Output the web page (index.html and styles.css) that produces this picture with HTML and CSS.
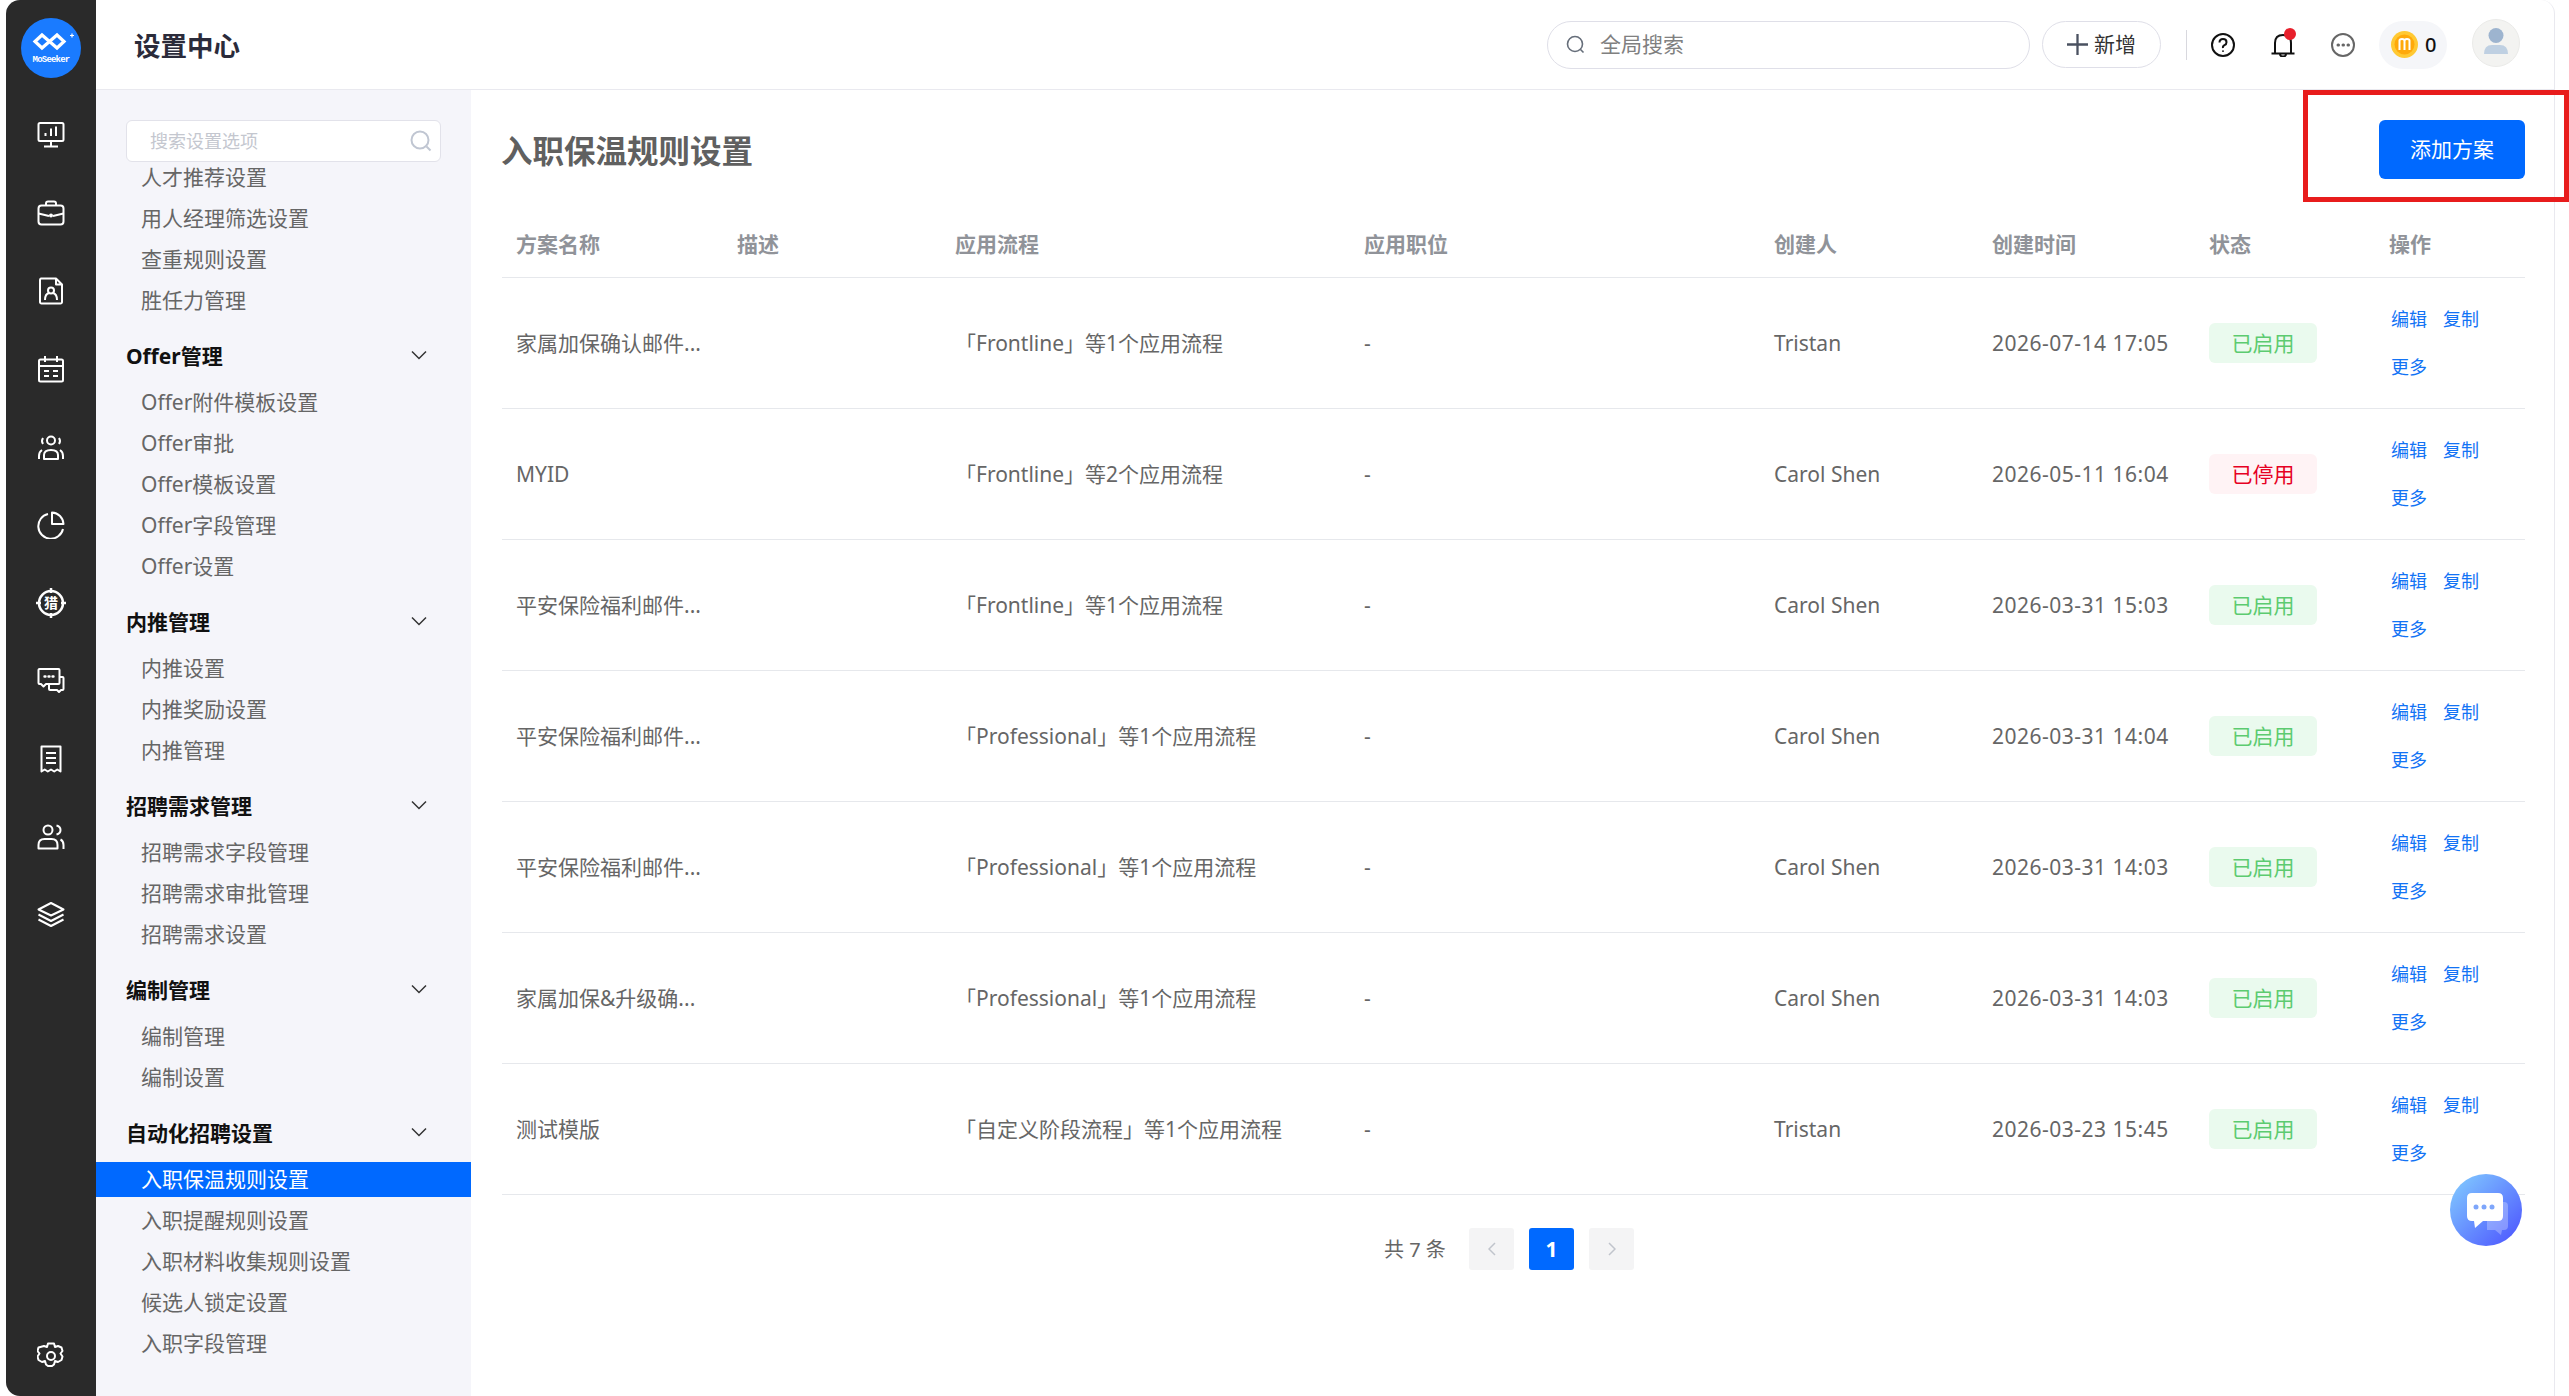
FILE: index.html
```html
<!DOCTYPE html>
<html lang="zh-CN">
<head>
    <meta charset="UTF-8">
    <title>设置中心</title>
    <link rel="stylesheet" href="styles.css">
</head>
<body>
<div class="app">
    <!-- Icon rail -->
    <nav class="rail">
        <div class="logo">
            <svg width="60" height="60" viewBox="0 0 60 60">
                <path class="logo-mark" d="M14 23.5 21 17l7.5 6.5L21 30ZM28.500 23.500 36 17l7 6.500L36 30Z"/>
                <path class="logo-star" d="M49 17.500h4M51 15.500v4"/>
                <text class="logo-text" x="30" y="44" text-anchor="middle">MoSeeker</text>
            </svg>
        </div>
        <a class="rail-item"><svg class="rail-icon" viewBox="0 0 28 28"><rect x="1.500" y="2" width="25" height="18" rx="1.500"/><path d="M14 20v5M7 25.500h14M8.500 15v-3M14 15V7.500M19 15V5.500"/></svg></a>
        <a class="rail-item"><svg class="rail-icon" viewBox="0 0 28 28"><rect x="1.500" y="6.500" width="25" height="19" rx="3"/><path d="M9 6.500V4.500q0-2 2-2h6q2 0 2 2v2M1.500 14.500 12 17M26.500 14.500 16 17"/><circle cx="14" cy="16.500" r="1"/></svg></a>
        <a class="rail-item"><svg class="rail-icon" viewBox="0 0 28 28"><path d="M4 1.500h15l6 6V25a1.500 1.500 0 0 1-1.500 1.500h-19A1.500 1.500 0 0 1 3 25V3a1.500 1.500 0 0 1 1-1.500ZM19 1.500v6h6"/><circle cx="14" cy="13.500" r="3"/><path d="M8 23q0-6 4-7M20 23q0-6-4-7"/></svg></a>
        <a class="rail-item"><svg class="rail-icon" viewBox="0 0 28 28"><rect x="2" y="4.500" width="24" height="22" rx="1.500"/><path d="M8 1v6M20 1v6M2 11h24M7 16h5M16 16h5M7 21h5M16 21h5"/></svg></a>
        <a class="rail-item"><svg class="rail-icon" viewBox="0 0 28 28"><circle cx="14" cy="7.500" r="4"/><path d="M6 11q-2-3 0-6M22 11q2-3 0-6M7 26v-4q0-5 7-5t7 5v4ZM2 26v-3q0-4 3-6M26 26v-3q0-4-3-6"/></svg></a>
        <a class="rail-item"><svg class="rail-icon" viewBox="0 0 28 28"><path d="M11 3a12.500 12.500 0 1 0 15 15"/><path d="M15 1.500a12 12 0 0 1 11.500 11.500H15Z"/></svg></a>
        <a class="rail-item rail-hunt"><svg class="rail-icon rail-icon-ring" viewBox="0 0 30 30"><circle cx="15" cy="15" r="12"/><path d="M15 0v5M15 25v5M0 15h5M25 15h5"/></svg><span class="hunt-text">猎</span></a>
        <a class="rail-item"><svg class="rail-icon" viewBox="0 0 28 28"><path d="M2.500 2h19a1 1 0 0 1 1 1v13a1 1 0 0 1-1 1H9l-2.500 2.500L4 17H2.500a1 1 0 0 1-1-1V3a1 1 0 0 1 1-1Z"/><path d="M22.500 10h3a1 1 0 0 1 1 1v11a1 1 0 0 1-1 1H24l-2 2-2-2h-7a1 1 0 0 1-1-1v-5"/><path class="dots" d="M7.500 9.500h1M11.500 9.500h1M15.500 9.500h1"/></svg></a>
        <a class="rail-item"><svg class="rail-icon" viewBox="0 0 28 28"><path d="M4.500 1.500h19v25l-3.200-2-3.100 2-3.200-2-3.200 2-3.100-2-3.200 2Z"/><path d="M9 8h10M9 13h10M9 18h10"/></svg></a>
        <a class="rail-item"><svg class="rail-icon" viewBox="0 0 28 28"><circle cx="11" cy="7" r="4.500"/><path d="M1.500 25.500V22q0-6 6-6h7q6 0 6 6v3.500ZM19.500 2.500q4 1 4 4.500t-4 4.500M26.500 26v-4q0-4-3-5.500"/></svg></a>
        <a class="rail-item"><svg class="rail-icon" viewBox="0 0 28 28"><path d="M14 2 26.500 8.500 14 14.500 1.500 8.500ZM1.500 13.500 14 20l12.500-6.500M1.500 18.500 14 25l12.500-6.500"/></svg></a>
        <a class="rail-item rail-bottom"><svg class="rail-icon" viewBox="0 0 28 28"><path d="M11 1.500h6l1 3.500 3-1 3.500 1.500 1 3.500-2 2.500 2 3-1 3.500-3.500 2-3-1-1 3.500-2 1.500h-4l-2-1.500-1-3.500-3 1-3.500-2-1-3.500 2-3-2-2.500 1-3.500L7 4l3 1Z"/><circle cx="14" cy="14" r="4"/></svg></a>
    </nav>

    <div class="right">
        <!-- Top bar -->
        <header class="topbar">
            <div class="topbar-title">设置中心</div>
            <div class="global-search">
                <svg class="search-icon" viewBox="0 0 20 20"><circle cx="9" cy="9" r="7.500"/><path d="m14.500 14.500 3 3"/></svg>
                <span>全局搜索</span>
            </div>
            <button class="add-btn"><svg class="plus" viewBox="0 0 22 22"><path d="M11 0v22M0 11h22"/></svg>新增</button>
            <span class="divider"></span>
            <svg class="top-icon" viewBox="0 0 24 24"><circle cx="12" cy="12" r="11"/><path d="M8.500 9.500q0-3.500 3.500-3.500t3.500 3.200q0 2-2 3t-1.500 2.800"/><path d="M12 17.500v1.200"/></svg>
            <div class="bell">
                <svg class="top-icon" viewBox="0 0 24 24"><path d="M4 20V10q0-8 8-8t8 8v10M0.500 20.500h23M9 21q0 2.500 3 2.500t3-2.500"/></svg>
                <span class="bell-dot"></span>
            </div>
            <svg class="top-icon top-icon-grey" viewBox="0 0 24 24"><circle cx="12" cy="12" r="11"/><path class="dots" d="M7 12h.5M12 12h.5M17 12h.5"/></svg>
            <div class="coins">
                <svg width="27" height="27" viewBox="0 0 27 27"><circle cx="13.500" cy="13.500" r="13.500" fill="#ffc933"/><circle cx="13.500" cy="13.500" r="10" fill="#ffa90a"/><path d="M8.500 19V9.500q0-1.500 2.500-1.500t2.500 2v9M13.500 10q0-2 2.500-2t2.500 1.500V19" fill="none" stroke="#fff" stroke-width="2"/></svg>
                <span>0</span>
            </div>
            <div class="avatar">
                <svg width="48" height="48" viewBox="0 0 48 48"><circle cx="24" cy="16.500" r="7.500" fill="#9db4cf"/><path d="M12 35q0-9 8-9h8q8 0 8 9Z" fill="#bfd0e2"/></svg>
            </div>
        </header>

        <div class="body">
            <!-- Settings menu -->
            <aside class="sidebar">
                <div class="side-search">
                    <input type="text" placeholder="搜索设置选项">
                    <svg class="side-search-icon" viewBox="0 0 22 22"><circle cx="10" cy="10" r="8.500"/><path d="m16.500 16.500 4 4"/></svg>
                </div>
                <div class="side-list">
                    <a class="side-item">人才推荐设置</a>
                    <a class="side-item">用人经理筛选设置</a>
                    <a class="side-item">查重规则设置</a>
                    <a class="side-item">胜任力管理</a>
                </div>
                <div class="side-group">Offer管理<svg class="chevron" viewBox="0 0 16 10"><path d="m1 1.500 7 7 7-7"/></svg></div>
                <div class="side-list">
                    <a class="side-item">Offer附件模板设置</a>
                    <a class="side-item">Offer审批</a>
                    <a class="side-item">Offer模板设置</a>
                    <a class="side-item">Offer字段管理</a>
                    <a class="side-item">Offer设置</a>
                </div>
                <div class="side-group">内推管理<svg class="chevron" viewBox="0 0 16 10"><path d="m1 1.500 7 7 7-7"/></svg></div>
                <div class="side-list">
                    <a class="side-item">内推设置</a>
                    <a class="side-item">内推奖励设置</a>
                    <a class="side-item">内推管理</a>
                </div>
                <div class="side-group">招聘需求管理<svg class="chevron" viewBox="0 0 16 10"><path d="m1 1.500 7 7 7-7"/></svg></div>
                <div class="side-list">
                    <a class="side-item">招聘需求字段管理</a>
                    <a class="side-item">招聘需求审批管理</a>
                    <a class="side-item">招聘需求设置</a>
                </div>
                <div class="side-group">编制管理<svg class="chevron" viewBox="0 0 16 10"><path d="m1 1.500 7 7 7-7"/></svg></div>
                <div class="side-list">
                    <a class="side-item">编制管理</a>
                    <a class="side-item">编制设置</a>
                </div>
                <div class="side-group">自动化招聘设置<svg class="chevron" viewBox="0 0 16 10"><path d="m1 1.500 7 7 7-7"/></svg></div>
                <div class="side-list">
                    <a class="side-item active">入职保温规则设置</a>
                    <a class="side-item">入职提醒规则设置</a>
                    <a class="side-item">入职材料收集规则设置</a>
                    <a class="side-item">候选人锁定设置</a>
                    <a class="side-item">入职字段管理</a>
                </div>
            </aside>

            <!-- Rule list -->
            <main class="main">
                <div class="page-head">
                    <h1>入职保温规则设置</h1>
                    <button class="primary-btn">添加方案</button>
                </div>
                <table class="rules">
                    <colgroup>
                        <col class="c-name"><col class="c-desc"><col class="c-flow"><col class="c-job">
                        <col class="c-user"><col class="c-time"><col class="c-state"><col class="c-ops">
                    </colgroup>
                    <thead>
                        <tr><th>方案名称</th><th>描述</th><th>应用流程</th><th>应用职位</th><th>创建人</th><th>创建时间</th><th>状态</th><th>操作</th></tr>
                    </thead>
                    <tbody>
                        <tr>
                            <td>家属加保确认邮件...</td><td></td><td>「Frontline」等1个应用流程</td><td>-</td><td>Tristan</td><td class="date">2026-07-14 17:05</td>
                            <td><span class="badge on">已启用</span></td>
                            <td class="ops"><a>编辑</a><a>复制</a><a>更多</a></td>
                        </tr>
                        <tr>
                            <td class="latin">MYID</td><td></td><td>「Frontline」等2个应用流程</td><td>-</td><td>Carol Shen</td><td class="date">2026-05-11 16:04</td>
                            <td><span class="badge off">已停用</span></td>
                            <td class="ops"><a>编辑</a><a>复制</a><a>更多</a></td>
                        </tr>
                        <tr>
                            <td>平安保险福利邮件...</td><td></td><td>「Frontline」等1个应用流程</td><td>-</td><td>Carol Shen</td><td class="date">2026-03-31 15:03</td>
                            <td><span class="badge on">已启用</span></td>
                            <td class="ops"><a>编辑</a><a>复制</a><a>更多</a></td>
                        </tr>
                        <tr>
                            <td>平安保险福利邮件...</td><td></td><td>「Professional」等1个应用流程</td><td>-</td><td>Carol Shen</td><td class="date">2026-03-31 14:04</td>
                            <td><span class="badge on">已启用</span></td>
                            <td class="ops"><a>编辑</a><a>复制</a><a>更多</a></td>
                        </tr>
                        <tr>
                            <td>平安保险福利邮件...</td><td></td><td>「Professional」等1个应用流程</td><td>-</td><td>Carol Shen</td><td class="date">2026-03-31 14:03</td>
                            <td><span class="badge on">已启用</span></td>
                            <td class="ops"><a>编辑</a><a>复制</a><a>更多</a></td>
                        </tr>
                        <tr>
                            <td>家属加保&amp;升级确...</td><td></td><td>「Professional」等1个应用流程</td><td>-</td><td>Carol Shen</td><td class="date">2026-03-31 14:03</td>
                            <td><span class="badge on">已启用</span></td>
                            <td class="ops"><a>编辑</a><a>复制</a><a>更多</a></td>
                        </tr>
                        <tr>
                            <td>测试模版</td><td></td><td>「自定义阶段流程」等1个应用流程</td><td>-</td><td>Tristan</td><td class="date">2026-03-23 15:45</td>
                            <td><span class="badge on">已启用</span></td>
                            <td class="ops"><a>编辑</a><a>复制</a><a>更多</a></td>
                        </tr>
                    </tbody>
                </table>
                <div class="pager">
                    <span class="pager-total">共 7 条</span>
                    <span class="page-btn"><svg class="page-arrow" viewBox="0 0 8 14"><path d="M7 1 1 7l6 6"/></svg></span>
                    <span class="page-btn current">1</span>
                    <span class="page-btn"><svg class="page-arrow" viewBox="0 0 8 14"><path d="m1 1 6 6-6 6"/></svg></span>
                </div>
            </main>
        </div>
    </div>

    <!-- Red annotation round the button -->
    <div class="annotation"></div>

    <!-- Chat bubble -->
    <div class="chat-float">
        <svg width="41" height="42" viewBox="0 0 41 42">
            <path d="M20 9h17q4 0 4 4v20q0 4-4 4h-2l-1 5-6-5H20Z" fill="#fff" fill-opacity=".28"/>
            <path d="M5 0h26q5 0 5 5v18q0 5-5 5H16l-8 7-1-7H5q-5 0-5-5V5q0-5 5-5Z" fill="#fff"/>
            <circle cx="9" cy="14" r="2.500" fill="#7ea6fb"/><circle cx="17" cy="14" r="2.500" fill="#7ea6fb"/><circle cx="25" cy="14" r="2.500" fill="#7ea6fb"/>
        </svg>
    </div>
</div>
</body>
</html>
```

FILE: styles.css
```css
* { box-sizing: border-box; }
html, body { margin: 0; height: 100%; overflow: hidden; background: #fff; }
body { font-family: "Noto Sans", "Noto Sans CJK SC", sans-serif; font-size: 21px; color: #666; }
a { text-decoration: none; }

.app { position: relative; display: flex; height: 100vh; padding-left: 6px; }

/* rail */
.rail { display: flex; flex-direction: column; align-items: center; width: 90px; height: 100%; flex: none; padding: 18px 0 1px; background: #2a2a2a; border-radius: 14px 0 0 14px; }
.logo { width: 60px; height: 60px; margin-bottom: 18px; border-radius: 50%; background: #1a7bff; }
.logo svg { display: block; }
.logo-mark { fill: none; stroke: #fff; stroke-width: 3.2; }
.logo-star { fill: none; stroke: #fff; stroke-width: 1.2; }
.logo-text { fill: #fff; font-size: 9px; font-weight: 700; font-family: "Liberation Mono", monospace; letter-spacing: -.8px; }
.rail-item { position: relative; display: flex; align-items: center; justify-content: center; width: 100%; height: 78px; flex: none; }
.rail-bottom { margin-top: auto; }
.rail-icon { width: 28px; height: 28px; fill: none; stroke: #fff; stroke-width: 2; stroke-linejoin: round; }
.rail-icon-ring { width: 30px; height: 30px; stroke-width: 2.5; }
.rail-icon .dots { stroke-width: 2.4; stroke-linecap: round; }
.hunt-text { position: absolute; left: 0; right: 0; text-align: center; color: #fff; font-size: 14px; font-weight: 700; line-height: 76px; }

/* top bar */
.right { display: flex; flex-direction: column; flex: 1; min-width: 0; padding-right: 14px; }
.topbar { display: flex; align-items: center; height: 90px; flex: none; padding: 0 34px 0 38px; border-bottom: 1px solid #e9e9ef; border-right: 1px solid #e9e9ef; border-top-right-radius: 14px; }
.topbar-title { margin-right: auto; font-size: 26.5px; font-weight: 700; color: #2b2b3a; }
.global-search { display: flex; align-items: center; gap: 14px; width: 483px; height: 48px; padding-left: 18px; border: 1px solid #dfdfe8; border-radius: 24px; color: #808080; }
.global-search span { padding-bottom: 3px; }
.search-icon { width: 20px; height: 20px; fill: none; stroke: #666e7a; stroke-width: 1.6; }
.add-btn { display: flex; align-items: center; justify-content: center; gap: 6px; width: 119px; height: 47px; margin-left: 12px; padding: 0 0 3px; border: 1px solid #dfdfe8; border-radius: 24px; background: #fff; font: inherit; color: #333; }
.plus { width: 21px; height: 21px; margin-top: 3px; fill: none; stroke: #4a5160; stroke-width: 2.4; }
.divider { width: 1px; height: 30px; margin: 0 24px 0 25px; background: #d8d8de; }
.top-icon { display: block; width: 24px; height: 24px; fill: none; stroke: #111; stroke-width: 2; }
.top-icon .dots { stroke-width: 3; stroke-linecap: round; stroke: #666; }
.top-icon-grey { stroke: #666; }
.bell { position: relative; margin: 0 36px; }
.bell-dot { position: absolute; top: -5px; right: -1px; width: 12px; height: 12px; border-radius: 50%; background: #e8202c; }
.coins { display: flex; align-items: center; gap: 7px; width: 68px; height: 48px; margin-left: 24px; padding-left: 12px; border-radius: 24px; background: #f5f6f9; color: #111; font-size: 20px; font-weight: 500; }
.coins svg { flex: none; }
.avatar { width: 48px; height: 48px; margin: -4px 0 0 25px; border-radius: 50%; background: #f3f3f1; border: 1px solid #ebebe9; overflow: hidden; }
.avatar svg { display: block; margin: -1px; }

/* settings menu */
.body { display: flex; flex: 1; min-height: 0; }
.sidebar { width: 375px; flex: none; padding-top: 30px; background: #f5f5fa; overflow: hidden; }
.side-search { position: relative; height: 42px; margin: 0 30px -2px; }
.side-search input { display: block; width: 100%; height: 100%; padding: 0 50px 0 23px; border: 1px solid #e2e2ea; border-radius: 6px; background: #fff; font: inherit; font-size: 18px; outline: none; }
.side-search input::placeholder { color: #c4c7cf; }
.side-search-icon { position: absolute; top: 10px; right: 9px; width: 22px; height: 22px; fill: none; stroke: #c0c6d2; stroke-width: 2; }
.side-list { display: flex; flex-direction: column; gap: 6px; }
.side-item { display: block; height: 35px; padding-left: 45px; line-height: 35px; color: #666; white-space: nowrap; }
.side-item.active { background: #0069ff; color: #fff; }
.side-group { display: flex; align-items: center; justify-content: space-between; height: 35px; margin: 19px 44px 13px 30px; font-weight: 700; color: #111; }
.chevron { width: 16px; height: 10px; fill: none; stroke: #333; stroke-width: 1.5; }

/* main */
.main { flex: 1; min-width: 0; padding: 30px 29px 0 31px; border-right: 1px solid #e9e9ef; }
.page-head { display: flex; align-items: center; justify-content: space-between; height: 59px; margin-bottom: 32px; }
.page-head h1 { margin: 0 0 2px -1px; font-size: 31.5px; font-weight: 700; color: #606060; }
.primary-btn { width: 146px; height: 59px; padding: 0 0 3px; border: 0; border-radius: 6px; background: #0069ff; color: #fff; font: inherit; }

.rules { width: 100%; border-collapse: collapse; table-layout: fixed; }
.c-name { width: 221px; }
.c-desc { width: 218px; }
.c-flow { width: 409px; }
.c-job { width: 410px; }
.c-user { width: 218px; }
.c-time { width: 217px; }
.c-state { width: 180px; }
.c-ops { width: 150px; }
.rules th { height: 66px; padding: 0 14px 2px; border-bottom: 1px solid #e6e8ec; text-align: left; font-weight: 700; color: #909399; }
.rules td { height: 131px; padding: 0 14px; border-bottom: 1px solid #e6e8ec; white-space: nowrap; color: #666; }
.rules td:nth-child(1), .rules td:nth-child(3) { padding-bottom: 2px; }
.rules td.latin { padding-bottom: 0; }
.rules td.date { letter-spacing: .5px; }
.badge { display: block; width: 108px; height: 40px; border-radius: 6px; line-height: 40px; text-align: center; }
.badge.on { background: #eafaee; color: #5ccb70; }
.badge.off { background: #fff3f5; color: #e60023; }
.rules td.ops { padding-left: 16px; font-size: 18px; line-height: 48px; white-space: normal; }
.ops a { display: inline-block; margin-right: 16px; color: #1273f5; }

.pager { display: flex; align-items: center; height: 42px; margin: 33px 0 0 882px; }
.pager-total { width: 85px; flex: none; font-size: 20px; color: #666; white-space: nowrap; }
.page-btn { display: flex; align-items: center; justify-content: center; width: 45px; height: 42px; margin-right: 15px; border-radius: 3px; background: #f4f4f5; font-weight: 700; }
.page-btn.current { background: #0069ff; color: #fff; }
.page-arrow { width: 8px; height: 14px; fill: none; stroke: #c0c4cc; stroke-width: 1.5; }

/* overlays */
.annotation { position: absolute; top: 90px; right: 0; width: 266px; height: 112px; border: 5px solid #e81c1c; }
.chat-float { position: absolute; top: 1174px; left: 2450px; width: 72px; height: 72px; padding: 19px 0 0 17px; border-radius: 50%; background: linear-gradient(135deg, #84d0ff, #4a50ff); }
.chat-float svg { display: block; }
```
